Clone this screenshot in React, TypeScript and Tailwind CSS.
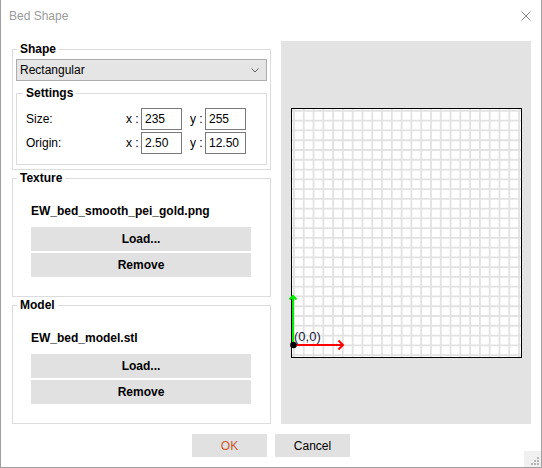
import { ReactNode } from 'react'
import clsx from 'clsx'

type GroupProps = {
  title: string
  className?: string
  legendClassName?: string
  children: ReactNode
}

function Group({ title, className, legendClassName, children }: GroupProps) {
  return (
    <fieldset className={clsx("border border-[#dcdcdc]", className)}>
      <legend className={clsx("px-[3px] font-bold leading-4", legendClassName)}>{title}</legend>
      {children}
    </fieldset>
  )
}

function GrayButton({ children }: { children: ReactNode }) {
  return (
    <button className="w-[220px] h-[24px] bg-[#e1e1e1] font-bold leading-4 flex items-center justify-center">
      {children}
    </button>
  )
}

function FileGroup({ title, file }: { title: string; file: string }) {
  return (
    <Group title={title} className="pl-[18px] pb-[19px]" legendClassName="-ml-[14px]">
      <div className="mt-[17px] leading-4 font-bold">{file}</div>
      <div className="mt-[8px] flex flex-col gap-[2px]">
        <GrayButton>Load...</GrayButton>
        <GrayButton>Remove</GrayButton>
      </div>
    </Group>
  )
}

function NumberField({ value }: { value: string }) {
  return (
    <div className="w-[41px] h-[22px] border border-[#7a7a7a] bg-white pl-[3px] flex items-center leading-4">
      {value}
    </div>
  )
}

function SettingsRow({ label, x, y }: { label: string; x: string; y: string }) {
  return (
    <div className="flex items-center">
      <span className="w-[101px] pl-[1px]">{label}</span>
      <span className="w-[15px]">x :</span>
      <NumberField value={x} />
      <span className="w-[15px] ml-[8px]">y :</span>
      <NumberField value={y} />
    </div>
  )
}

// bed 235 x 255, origin 2.5 / 12.5, drawn into a 230 x 249 px rect
function BedPreview() {
  const sx = 230 / 235
  const sy = 249 / 255
  const left = 10.5
  const top = 67.5
  const right = 240.5
  const bottom = 316.5

  const vLines: number[] = []
  for (let k = 0; 2.5 + 10 * k < 235; k++) vLines.push(left + (2.5 + 10 * k) * sx)
  const hLines: number[] = []
  for (let k = -1; 12.5 + 10 * k < 255; k++) hLines.push(bottom - (12.5 + 10 * k) * sy)

  return (
    <svg width="250" height="383" viewBox="0 0 250 383">
      <rect x={left} y={top} width={230} height={249} fill="#ffffff" />
      {vLines.map((x) => (
        <line key={'v' + x} x1={x} y1={top} x2={x} y2={bottom} stroke="#e2e2e2" strokeWidth={1.8} />
      ))}
      {hLines.map((y) => (
        <line key={'h' + y} x1={left} y1={y} x2={right} y2={y} stroke="#e2e2e2" strokeWidth={1.8} />
      ))}
      <rect x={left} y={top} width={230} height={249} fill="none" stroke="#000" strokeWidth={1} />

      {/* axes */}
      <line x1={12} y1={304} x2={12} y2={255} stroke="#00ee00" strokeWidth={2} />
      <polyline points="8.5,258.5 12,255 15.5,258.5" fill="none" stroke="#00ee00" strokeWidth={2} />
      <line x1={12} y1={304} x2={62} y2={304} stroke="#ff0000" strokeWidth={2} />
      <polyline points="57.5,299.5 62,304 57.5,308.5" fill="none" stroke="#ff0000" strokeWidth={2} />
      <circle cx={12.5} cy={304} r={3.3} fill="#000" />
      <text x={13} y={300} fontSize={13} fill="#1c1c3c" fontFamily="Liberation Sans, sans-serif">
        (0,0)
      </text>
    </svg>
  )
}

export default function App() {
  return (
    <div className="relative w-[542px] h-[468px] bg-white border-x border-b border-[#a0a0a0] flex flex-col font-['Liberation_Sans',sans-serif] text-[12px] text-black">
      {/* Title bar */}
      <div className="h-[32px] flex items-center justify-between pl-[8px] pr-[10px]">
        <span className="text-[#9b9b9b]">Bed Shape</span>
        <svg width="10" height="10" viewBox="0 0 10 10">
          <path d="M0.5 0.5 L9.5 9.5 M9.5 0.5 L0.5 9.5" stroke="#8a8a8a" strokeWidth={1} />
        </svg>
      </div>

      <div className="flex pt-[9px] pl-[11px] gap-[10px]">
        {/* Left column */}
        <div className="w-[259px] flex flex-col">
          <Group title="Shape" className="px-[3px] pb-[4px]" legendClassName="ml-[1px]">
            <div className="mt-[2px] h-[22px] bg-[#e5e5e5] border border-[#adadad] flex items-center justify-between pl-[3px] pr-[7px]">
              <span>Rectangular</span>
              <svg width="8" height="5" viewBox="0 0 8 5">
                <path d="M0.5 0.5 L4 4 L7.5 0.5" fill="none" stroke="#606060" strokeWidth={1} />
              </svg>
            </div>
            <Group title="Settings" className="mt-[4px] px-[8px] pb-[10px]" legendClassName="-ml-[2px] px-[2px]">
              <div className="mt-[7px] flex flex-col gap-[2px]">
                <SettingsRow label="Size:" x="235" y="255" />
                <SettingsRow label="Origin:" x="2.50" y="12.50" />
              </div>
            </Group>
          </Group>
          <FileGroup title="Texture" file="EW_bed_smooth_pei_gold.png" />
          <FileGroup title="Model" file="EW_bed_model.stl" />
        </div>

        {/* Bed preview */}
        <div className="w-[250px] h-[383px] bg-[#e3e3e3]">
          <BedPreview />
        </div>
      </div>

      {/* Dialog buttons */}
      <div className="mt-[10px] flex justify-center gap-[8px]">
        <button className="w-[75px] h-[23px] bg-[#e1e1e1] text-[#cc5a2a]">OK</button>
        <button className="w-[75px] h-[23px] bg-[#e1e1e1]">Cancel</button>
      </div>

      {/* Resize grip */}
      <div className="absolute right-0 bottom-0 w-[17px] h-[16px] bg-[#f0f0f0] flex items-end justify-end p-[2px]">
        <svg width="9" height="9" viewBox="0 0 9 9">
          <rect x="7" y="1" width="2" height="2" fill="#b5b5b5" />
          <rect x="4" y="4" width="2" height="2" fill="#b5b5b5" />
          <rect x="7" y="4" width="2" height="2" fill="#b5b5b5" />
          <rect x="1" y="7" width="2" height="2" fill="#b5b5b5" />
          <rect x="4" y="7" width="2" height="2" fill="#b5b5b5" />
          <rect x="7" y="7" width="2" height="2" fill="#b5b5b5" />
        </svg>
      </div>
    </div>
  )
}
